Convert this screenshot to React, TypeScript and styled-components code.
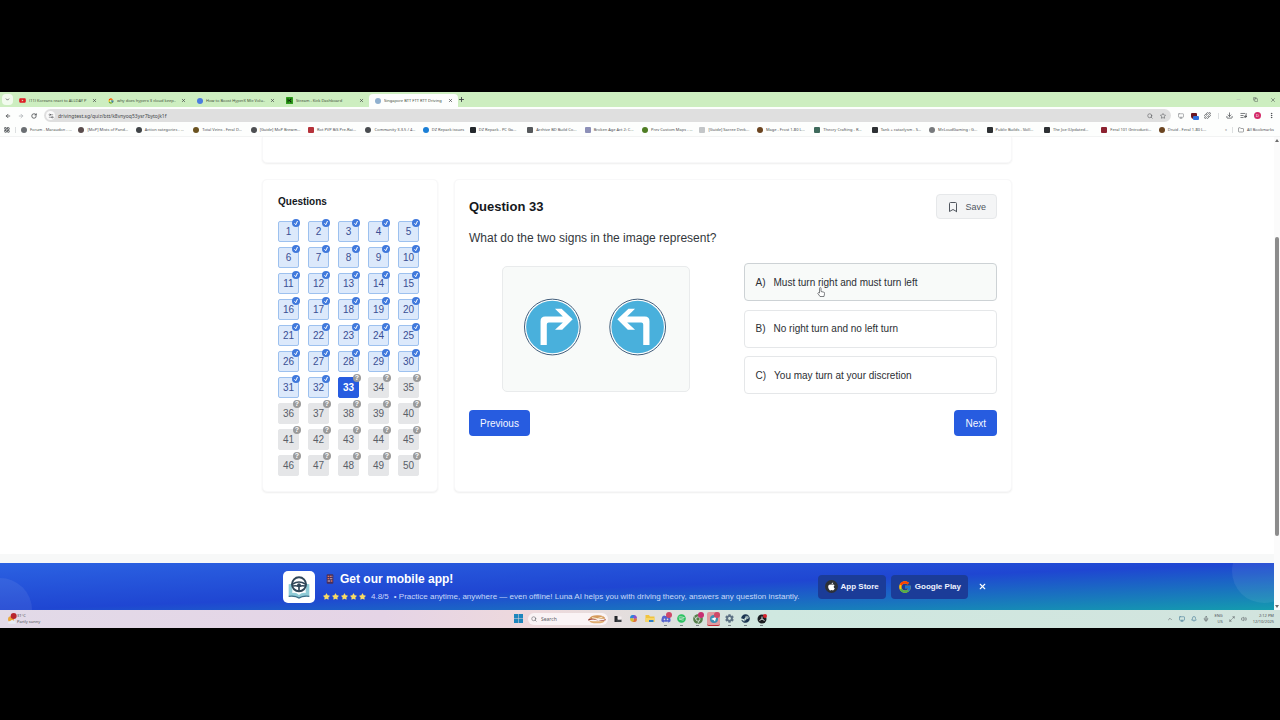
import React from "react";
import styled, { createGlobalStyle } from "styled-components";
import {
  ArrowLeft, ArrowRight, Bell, Bookmark, ChevronDown, ChevronUp, Download, Folder, LayoutGrid, Maximize2,
  Mic, Minus, Monitor, MoreVertical, Plus, Puzzle, RotateCw, Search, Settings2, Star, Volume2, X, ListMusic, Copy,
} from "lucide-react";
import { FaApple, FaChrome, FaDiscord, FaSpotify, FaSteam, FaStar, FaCog, FaYoutube } from "react-icons/fa";
import { FcGoogle } from "react-icons/fc";

const sans = `"Liberation Sans", Arial, sans-serif`;
const ui = `"Noto Sans", "Open Sans", sans-serif`;

const Global = createGlobalStyle`
  * { box-sizing: border-box; }
  body { margin: 0; background: #000; font-family: ${sans}; color: #1f2328; }
  button, input { font: inherit; color: inherit; margin: 0; }
  button { cursor: pointer; padding: 0; border: 0; background: none; }
  h1, h2, h3, p { margin: 0; }
  svg { display: block; flex: none; }
`;

const Frame = styled.div`
  min-height: 100vh;
  display: flex;
  flex-direction: column;
  justify-content: center;
  overflow: hidden;
`;

/* ---------- browser chrome ---------- */

const TabStrip = styled.div`
  display: flex;
  align-items: center;
  height: 15px;
  padding: 0 4px 0 2px;
  background: #cdeec0;
  font-family: ${ui};
  font-size: 4px;
  line-height: 8px;
`;
const TabSearch = styled.button`
  display: grid;
  place-items: center;
  width: 11px;
  height: 11px;
  border-radius: 4px;
  background: #f2fbee;
`;
const Tab = styled.div<{ $active?: boolean }>`
  display: flex;
  align-items: center;
  gap: 3px;
  width: 89px;
  height: 13px;
  align-self: flex-end;
  padding: 0 5px 0 6px;
  border-radius: 4px 4px 0 0;
  background: ${(p) => (p.$active ? "#fdfefd" : "transparent")};
  color: #3c4a38;
`;
const TabTitle = styled.span`
  flex: 1;
  overflow: hidden;
  white-space: nowrap;
`;
const Grow = styled.div`
  flex: 1;
`;
const WindowButtons = styled.div`
  display: flex;
  align-items: center;
  gap: 12px;
  color: #3b4a37;
`;
const IconButton = styled.button<{ $dim?: boolean }>`
  display: grid;
  place-items: center;
  color: ${(p) => (p.$dim ? "#a9adb0" : "#3d4043")};
`;
const AddressRow = styled.div`
  display: flex;
  align-items: center;
  gap: 7px;
  height: 17px;
  padding: 0 5px;
  background: #fdfefd;
`;
const UrlBar = styled.label`
  flex: 1;
  display: flex;
  align-items: center;
  gap: 7px;
  height: 13px;
  padding: 0 5px 0 2px;
  border-radius: 7px;
  background: #dfdfdf;
  color: #44474a;
`;
const SiteInfo = styled.span`
  display: grid;
  place-items: center;
  width: 9px;
  height: 9px;
  margin-right: -4px;
  border-radius: 50%;
  background: #fafafa;
`;
const UrlInput = styled.input`
  flex: 1;
  min-width: 0;
  height: 9px;
  padding: 0;
  border: 0;
  outline: 0;
  background: transparent;
  font-family: ${ui};
  font-size: 5px;
`;
const ExtIcons = styled.div`
  display: flex;
  align-items: center;
  gap: 7px;
`;
const Avatar = styled.span`
  display: grid;
  place-items: center;
  width: 7px;
  height: 7px;
  border-radius: 50%;
  background: #d42a68;
  color: #fff;
  font-size: 4px;
  line-height: 7px;
`;
const Shield = styled.span`
  position: relative;
  width: 6px;
  height: 6px;
  border-radius: 1px 1px 3px 3px;
  background: #6b1620;
`;
const ShieldCount = styled.span`
  position: absolute;
  left: 2px;
  top: 3px;
  width: 6px;
  height: 4px;
  border-radius: 1px;
  background: #2f6fdc;
`;
const Rule = styled.span`
  width: 1px;
  height: 6px;
  background: #dcdfe0;
`;
const BookmarksRow = styled.nav`
  display: flex;
  align-items: center;
  gap: 5px;
  height: 13px;
  padding: 0 6px 1px 4px;
  background: #fdfefd;
  border-bottom: 1px solid #f2f3f3;
  color: #4a4d50;
  font-family: ${ui};
  font-size: 4px;
  line-height: 8px;
`;
const BookmarkList = styled.div`
  flex: 1;
  min-width: 0;
  display: flex;
  padding-right: 4px;
`;
const BookmarkLink = styled.a<{ $short?: boolean }>`
  flex: ${(p) => (p.$short ? "0 0 47px" : "1 1 0")};
  min-width: 0;
  display: flex;
  align-items: center;
  gap: 3px;
  padding-right: 7px;
  color: inherit;
  text-decoration: none;
  white-space: nowrap;
  overflow: hidden;
`;
const Favicon = styled.span<{ $bg: string; $round?: boolean }>`
  flex: none;
  display: grid;
  place-items: center;
  width: 6px;
  height: 6px;
  border-radius: ${(p) => (p.$round ? "50%" : "1px")};
  background: ${(p) => p.$bg};
`;
const AllBookmarks = styled.button`
  display: flex;
  align-items: center;
  gap: 3px;
`;

/* ---------- page ---------- */

const Viewport = styled.div`
  display: flex;
  background: #fff;
`;
const Page = styled.main`
  flex: 1;
  min-width: 0;
  display: flex;
  flex-direction: column;
`;
const Scrollbar = styled.div`
  width: 6px;
  display: flex;
  flex-direction: column;
  align-items: center;
  padding: 1px 0;
  background: #fbfbfb;
`;
const ScrollGap = styled.div<{ $grow: number }>`
  flex: ${(p) => p.$grow} 0 0;
`;
const ScrollThumb = styled.div`
  flex: 298 0 0;
  width: 4px;
  border-radius: 2px;
  background: #8c8c8c;
`;
const Arrow = styled.span<{ $down?: boolean }>`
  width: 4px;
  height: 3px;
  margin: 1px 0;
  background: #6d6d6d;
  clip-path: ${(p) => (p.$down ? "polygon(0 0, 100% 0, 50% 100%)" : "polygon(50% 0, 100% 100%, 0 100%)")};
`;
const Container = styled.div`
  width: 100%;
  max-width: 750px;
  margin: 0 auto;
  padding-bottom: 62px;
`;
const card = `
  background: #fff;
  border: 1px solid #f8f8f9;
  border-radius: 5px;
  box-shadow: 0 1px 2px rgba(0, 0, 0, 0.07);
`;
const TopCard = styled.div`
  ${card}
  height: 26px;
  border-top: 0;
  border-radius: 0 0 5px 5px;
`;
const Columns = styled.div`
  display: flex;
  gap: 16px;
  margin-top: 16px;
`;
const SideCard = styled.section`
  ${card}
  width: 176px;
  min-height: 313px;
  padding: 15px;
`;
const SideTitle = styled.h3`
  font-size: 10px;
  line-height: 14px;
  color: #15181c;
`;
const QuestionGrid = styled.div`
  display: grid;
  grid-template-columns: repeat(5, 21px);
  gap: 5px 9px;
  margin-top: 12px;
`;
type State = "done" | "current" | "open";
const cellColors: Record<State, string> = {
  done: "background:#dce9fb;border-color:#9dc1ef;color:#3a4f94;",
  current: "background:#275ce0;border-color:#275ce0;color:#fff;font-weight:700;",
  open: "background:#e5e6e8;border-color:#e5e6e8;color:#5a5f68;",
};
const Cell = styled.button<{ $state: State }>`
  position: relative;
  width: 21px;
  height: 21px;
  border: 1px solid;
  border-radius: 2px;
  font-size: 10px;
  line-height: 19px;
  text-align: center;
  ${(p) => cellColors[p.$state]}
`;
const Badge = styled.span<{ $done: boolean }>`
  position: absolute;
  top: ${(p) => (p.$done ? -3 : -4)}px;
  right: ${(p) => (p.$done ? -2 : -3)}px;
  display: grid;
  place-items: center;
  width: 8px;
  height: 8px;
  border-radius: 50%;
  background: ${(p) => (p.$done ? "#4079dc" : "#9a9a9a")};
  color: #fff;
  font-size: 7px;
  font-weight: 700;
  line-height: 8px;
`;
const MainCard = styled.section`
  ${card}
  flex: 1;
  min-width: 0;
  padding: 14px;
`;
const MainHead = styled.div`
  display: flex;
  align-items: center;
  justify-content: space-between;
`;
const MainTitle = styled.h2`
  font-size: 13px;
  line-height: 20px;
  color: #15181c;
`;
const SaveButton = styled.button`
  display: flex;
  align-items: center;
  gap: 6px;
  height: 25px;
  padding: 0 10px;
  border: 1px solid #e6e8ea;
  border-radius: 4px;
  background: #f4f5f6;
  color: #50565e;
  font-size: 9px;
`;
const Prompt = styled.p`
  margin-top: 10px;
  font-size: 12px;
  line-height: 18px;
  color: #33373c;
`;
const Body = styled.div`
  display: grid;
  grid-template-columns: 1fr 1fr;
  gap: 21px;
  margin-top: 16px;
`;
const Figure = styled.div`
  justify-self: center;
  align-self: center;
  width: 188px;
  height: 126px;
  border: 1px solid #e9ebec;
  border-radius: 5px;
  background: #f8faf9;
  overflow: hidden;
`;
const Options = styled.div`
  position: relative;
  display: flex;
  flex-direction: column;
  justify-content: space-between;
  min-height: 131px;
`;
const Option = styled.button<{ $hover?: boolean }>`
  display: flex;
  align-items: center;
  gap: 8px;
  height: 38px;
  padding: 0 11px;
  border: 1px solid ${(p) => (p.$hover ? "#cdd2d5" : "#e5e7e9")};
  border-radius: 4px;
  background: ${(p) => (p.$hover ? "#f8faf9" : "#fff")};
  color: #2b2f34;
  font-size: 10px;
  text-align: left;
`;
const Pointer = styled.svg`
  position: absolute;
  left: 73px;
  top: 24px;
`;
const NavRow = styled.div`
  display: flex;
  justify-content: space-between;
  margin-top: 16px;
`;
const NavButton = styled.button`
  height: 26px;
  padding: 0 11px;
  border-radius: 4px;
  background: #275ce0;
  color: #f4f7ff;
  font-size: 10px;
`;
const FooterStrip = styled.div`
  height: 9px;
  background: #f7f8f8;
`;

/* ---------- app banner ---------- */

const Banner = styled.aside`
  position: relative;
  display: flex;
  justify-content: center;
  align-items: center;
  height: 47px;
  overflow: hidden;
  background: linear-gradient(to bottom right, #2b62e2, #1f46d2 50%, #149cae);
`;
const Bubble = styled.span<{ $right?: boolean }>`
  position: absolute;
  width: 64px;
  height: 64px;
  border-radius: 50%;
  background: rgba(255, 255, 255, 0.07);
  ${(p) => (p.$right ? "right: -22px; top: -24px;" : "left: -32px; bottom: -32px;")}
`;
const BannerInner = styled.div`
  flex: 0 1 708px;
  display: flex;
  align-items: center;
  gap: 5px;
`;
const Logo = styled.div`
  display: grid;
  place-items: center;
  width: 32px;
  height: 32px;
  border-radius: 5px;
  background: #fff;
`;
const BannerText = styled.div`
  flex: 1;
  min-width: 0;
  padding-left: 3px;
  color: #c9d7fa;
  font-size: 8px;
  white-space: nowrap;
`;
const BannerTitle = styled.h2`
  display: flex;
  align-items: center;
  gap: 6px;
  padding-left: 3px;
  color: #fff;
  font-size: 12px;
  line-height: 18px;
`;
const Rating = styled.p`
  display: flex;
  align-items: center;
  gap: 5px;
  padding-top: 2px;
  line-height: 14px;
`;
const Stars = styled.span`
  display: flex;
  gap: 2px;
  color: #fbdc63;
`;
const StoreLink = styled.a`
  display: flex;
  align-items: center;
  gap: 3px;
  height: 24px;
  padding: 0 7px;
  border-radius: 4px;
  background: #1b3c98;
  color: #eef3ff;
  font-size: 8px;
  font-weight: 700;
  text-decoration: none;
  white-space: nowrap;
`;
const AppleDisc = styled.span`
  display: grid;
  place-items: center;
  width: 13px;
  height: 13px;
  border-radius: 50%;
  background: #2d3138;
  color: #fff;
`;
const CloseButton = styled.button`
  display: grid;
  place-items: center;
  width: 18px;
  height: 18px;
  color: #fff;
`;

/* ---------- taskbar ---------- */

const Taskbar = styled.footer`
  display: grid;
  grid-template-columns: 1fr auto 1fr;
  align-items: center;
  height: 18px;
  padding: 0 6px;
  background: linear-gradient(90deg, #e2dae8, #e5d4e6 30%, #eed9dc 42%, #dfe0de 52%, #cfe8e0 60%, #d2e4de);
  font-family: ${ui};
  font-size: 4px;
  line-height: 6px;
  color: #4c4f55;
`;
const Weather = styled.div`
  display: flex;
  align-items: center;
  padding-left: 1px;
`;
const Dock = styled.div`
  display: flex;
  align-items: center;
  gap: 3px;
`;
const SearchBox = styled.label`
  display: flex;
  align-items: center;
  gap: 4px;
  width: 80px;
  height: 12px;
  padding: 0 2px 0 3px;
  border-radius: 6px;
  background: #faf3f5;
`;
const SearchInput = styled.input`
  flex: 1;
  min-width: 0;
  height: 10px;
  padding: 0;
  border: 0;
  outline: 0;
  background: transparent;
  font-size: 5px;
  &::placeholder { color: #5d6066; opacity: 1; }
`;
const DockItem = styled.button<{ $active?: string; $run?: boolean }>`
  position: relative;
  display: grid;
  place-items: center;
  width: 13px;
  height: 14px;
  border-radius: 2px;
  background: ${(p) => p.$active || "transparent"};
  border-bottom: 1px solid ${(p) => (p.$active ? "#c22d39" : "transparent")};
  ${(p) =>
    p.$run &&
    `&::after { content: ""; position: absolute; bottom: -1px; left: 5px; width: 3px; height: 1px; background: #7d8489; }`}
`;
const Dot = styled.span<{ $bg?: string }>`
  position: absolute;
  right: 0;
  top: 0;
  width: 6px;
  height: 6px;
  border-radius: 50%;
  background: ${(p) => p.$bg || "#cf4868"};
`;
const Tray = styled.div`
  display: flex;
  align-items: center;
  justify-content: flex-end;
  gap: 6px;
  text-align: right;
  white-space: nowrap;
`;

/* ---------- data ---------- */

const tabs = [
  { icon: <FaYoutube size={7} color="#e01b24" />, title: "(11) Koreans react to ALLDAY P" },
  { icon: <FcGoogle size={6} />, title: "why does hyperx 3 cloud keep.." },
  { icon: <Favicon $bg="#4a7de0" $round />, title: "How to Boost HyperX Mic Volu.." },
  { icon: <KickIcon />, title: "Stream - Kick Dashboard" },
  { icon: <Favicon $bg="#8fb0cf" $round />, title: "Singapore BTT FTT RTT Driving", active: true },
];

const bookmarks: [string, string, boolean?][] = [
  ["Forum - Maraudon - ...", "#6a6e72", true],
  ["[MoP] Mists of Pand...", "#5a4c4c", true],
  ["Action categories - ...", "#3f4347", true],
  ["Total Veins - Feral D...", "#6b5320", true],
  ["[Guide] MoP Brewm...", "#4d4f52", true],
  ["Rot PVP BiS Pre-Rai...", "#b5323a"],
  ["Community 3.3.5 / 4...", "#494c50", true],
  ["DZ Repack issues", "#1b7fd6", true],
  ["DZ Repack - PC Ga...", "#23272b"],
  ["Archive BD Build Co...", "#55585b"],
  ["Broken Age Act 2: C...", "#8d90b8"],
  ["Prev Custom Maps - ...", "#4f7d24", true],
  ["[Guide] Sacree Deck...", "#c3c6c8"],
  ["Mage - Frost 1-80 L...", "#6b4420", true],
  ["Theory Crafting - R...", "#3f6a5c"],
  ["Tank + cataclysm - S...", "#2d3033"],
  ["McLoudGaming : G...", "#77797c", true],
  ["Public Builds - Skill...", "#2d3033"],
  ["The Joe (Updated...", "#2d3033"],
  ["Feral 101 (Introducti...", "#8c2230"],
  ["Druid - Feral 1-80 L...", "#6b4420", true],
];

const answers = ["Must turn right and must turn left", "No right turn and no left turn", "You may turn at your discretion"];

/* ---------- drawings ---------- */

function KickIcon() {
  return (
    <svg width="7" height="7" viewBox="0 0 14 14">
      <rect width="14" height="14" rx="1" fill="#2f9e1c" />
      <path d="M4 3v8M10 3v2H8v4h2v2M5 7h3" stroke="#0b2a05" strokeWidth="2" fill="none" />
    </svg>
  );
}

function SignArrow() {
  return (
    <path
      fill="#fff"
      d="M269 497V424Q269 410 283 410H337L313 386H333L367 418L335 450H313L337 428H294Q288 428 288 434V497Z"
    />
  );
}

function Signs() {
  return (
    <svg width="100%" height="100%" viewBox="156 259 564 378" role="img" aria-label="Two round blue signs with turn arrows">
      {[305, 565].map((cx) => (
        <g key={cx}>
          <circle cx={cx} cy="442" r="85" fill="#fff" stroke="#3d5a78" strokeWidth="3" />
          <circle cx={cx} cy="442" r="80" fill="#49b0dc" />
        </g>
      ))}
      <SignArrow />
      <g transform="translate(870 0) scale(-1 1)">
        <SignArrow />
      </g>
    </svg>
  );
}

function WheelLogo() {
  return (
    <svg width="24" height="24" viewBox="0 0 72 72" fill="none">
      <path d="M5 28V64Q25 60 36 68Q47 60 67 64V28L56 26V54Q44 52 36 60Q28 52 16 54V26Z" fill="#8fcbd6" />
      <path d="M5 62Q25 59 36 67Q47 59 67 62V66Q47 64 36 71Q25 64 5 66Z" fill="#3a6f88" />
      <circle cx="36" cy="28" r="21" fill="#fff" stroke="#2f4658" strokeWidth="6" />
      <path d="M17 27Q36 15 55 27M36 32L36 48M18 33Q28 31 34 34M54 33Q44 31 38 34" stroke="#2f4658" strokeWidth="5" />
      <circle cx="36" cy="31" r="6" fill="#2f4658" />
    </svg>
  );
}

function PhoneIcon() {
  return (
    <svg width="8" height="10" viewBox="0 0 24 30">
      <rect x="2" y="1" width="20" height="28" rx="3" fill="#4a2f5c" />
      <path d="M5 5h4v4H5zM11 5h4v4h-4zM5 12h4v4H5zM15 19h4v4h-4z" fill="#e0765a" />
      <path d="M16 5h3v4h-3zM11 12h8v4h-8zM5 19h8v4H5z" fill="#b08f9e" />
    </svg>
  );
}

function Windows() {
  return (
    <svg width="9" height="9" viewBox="0 0 18 18">
      <path d="M0 0h8.500v8.500H0zM9.500 0H18v8.500H9.500zM0 9.500h8.500V18H0zM9.500 9.500H18V18H9.500z" fill="#1d86bd" />
    </svg>
  );
}

function Burger() {
  return (
    <svg width="18" height="10" viewBox="0 0 54 30">
      <path d="M3 14Q10 3 30 4Q50 5 52 14Z" fill="#d59a5c" />
      <path d="M1 15Q14 11 26 17T53 15V19Q40 24 27 19T1 20Z" fill="#9a3b2c" />
      <path d="M4 20Q27 24 50 20Q48 28 27 28T4 20Z" fill="#e0ae72" />
      <path d="M12 11L28 14L44 9" stroke="#f8ecd5" strokeWidth="3" fill="none" />
    </svg>
  );
}

function TaskView() {
  return (
    <svg width="8" height="8" viewBox="0 0 16 16">
      <rect x="1" y="2" width="6" height="12" fill="#24272b" />
      <rect x="5" y="9" width="10" height="5" fill="#3b3f44" />
      <rect x="8" y="3" width="7" height="6" fill="#f4eef0" />
    </svg>
  );
}

function Copilot() {
  return (
    <svg width="9" height="9" viewBox="0 0 18 18">
      <path d="M2 9Q2 2 7 2h5L9 9z" fill="#2a86d8" />
      <path d="M11 2q5 1 5 7l-5 1-3-3z" fill="#8a4fd0" />
      <path d="M16 9q0 7-5 7H7l3-7z" fill="#e0703f" />
      <path d="M2 9l5-1 3 4-2 4Q2 15 2 9z" fill="#d9bb35" />
    </svg>
  );
}

function Explorer() {
  return (
    <svg width="10" height="9" viewBox="0 0 20 18">
      <path d="M1 2h7l2 3h9v11H1z" fill="#f0c33f" />
      <path d="M1 8h18v8H1z" fill="#f7d667" />
      <rect x="8" y="12" width="9" height="4" fill="#2f80c9" />
    </svg>
  );
}

function Obs() {
  return (
    <svg width="10" height="10" viewBox="0 0 20 20">
      <circle cx="10" cy="10" r="9" fill="#1b1d20" />
      <path d="M10 10V5M10 10l-5 3M10 10l5 3" stroke="#d8dadc" strokeWidth="2" />
      <circle cx="16" cy="4" r="4" fill="#d8232c" />
    </svg>
  );
}

function Telegram() {
  return (
    <svg width="10" height="10" viewBox="0 0 20 20">
      <circle cx="10" cy="10" r="8" fill="#3a8fb5" />
      <path d="M4 10l11-5-3 10-3-3z" fill="#fff" />
    </svg>
  );
}

function WeatherIcon() {
  return (
    <svg width="10" height="12" viewBox="0 0 30 36">
      <circle cx="12" cy="19" r="9" fill="#e9a63c" />
      <path d="M4 32q-3-8 6-8q5-6 11 0q7 1 5 8z" fill="#e6ebf5" />
      <circle cx="20" cy="9" r="9" fill="#b8262e" />
    </svg>
  );
}

/* ---------- sections ---------- */

function Chrome() {
  return (
    <header>
      <TabStrip>
        <TabSearch aria-label="Search tabs"><ChevronDown size={5} strokeWidth={3} /></TabSearch>
        {tabs.map((t) => (
          <Tab key={t.title} $active={t.active}>
            {t.icon}
            <TabTitle>{t.title}</TabTitle>
            <IconButton aria-label="Close tab"><X size={5} strokeWidth={3} /></IconButton>
          </Tab>
        ))}
        <IconButton aria-label="New tab"><Plus size={7} strokeWidth={3} /></IconButton>
        <Grow />
        <WindowButtons>
          <IconButton $dim aria-label="Minimize"><Minus size={5} /></IconButton>
          <IconButton aria-label="Restore"><Copy size={5} /></IconButton>
          <IconButton aria-label="Close"><X size={6} /></IconButton>
        </WindowButtons>
      </TabStrip>
      <AddressRow>
        <IconButton aria-label="Back"><ArrowLeft size={6} strokeWidth={3} /></IconButton>
        <IconButton $dim aria-label="Forward"><ArrowRight size={6} strokeWidth={3} /></IconButton>
        <IconButton aria-label="Reload"><RotateCw size={6} strokeWidth={3} /></IconButton>
        <UrlBar>
          <SiteInfo><Settings2 size={6} /></SiteInfo>
          <UrlInput aria-label="Address" defaultValue="drivingtest.sg/quiz/btt/k8vnyoq53ysr7bytojk1f" />
          <Search size={6} />
          <Star size={6} />
        </UrlBar>
        <ExtIcons>
          <Monitor size={6} color="#6b6e71" />
          <Shield><ShieldCount /></Shield>
          <Puzzle size={7} />
          <Rule />
          <Download size={7} />
          <ListMusic size={7} />
          <Avatar>D</Avatar>
          <MoreVertical size={7} />
        </ExtIcons>
      </AddressRow>
      <BookmarksRow>
        <LayoutGrid size={6} strokeWidth={3} />
        <Rule />
        <BookmarkList>
          {bookmarks.map(([title, color, round]) => (
            <BookmarkLink key={title} href="#" $short={title === "DZ Repack issues"}>
              <Favicon $bg={color} $round={round} />
              {title}
            </BookmarkLink>
          ))}
        </BookmarkList>
        <span>»</span>
        <Rule />
        <AllBookmarks><Folder size={6} />All Bookmarks</AllBookmarks>
      </BookmarksRow>
    </header>
  );
}

function QuestionCell({ n }: { n: number }) {
  const state: State = n < 33 ? "done" : n === 33 ? "current" : "open";
  const done = state === "done";
  return (
    <Cell $state={state}>
      {n}
      <Badge $done={done}>
        {done ? (
          <svg width="6" height="6" viewBox="0 0 12 12">
            <path d="M3 6.500L5.500 9.500L9 2" stroke="#fff" strokeWidth="2" fill="none" />
          </svg>
        ) : (
          "?"
        )}
      </Badge>
    </Cell>
  );
}

function Quiz() {
  return (
    <Container>
      <TopCard />
      <Columns>
        <SideCard>
          <SideTitle>Questions</SideTitle>
          <QuestionGrid>
            {Array.from({ length: 50 }, (_, i) => <QuestionCell key={i} n={i + 1} />)}
          </QuestionGrid>
        </SideCard>
        <MainCard>
          <MainHead>
            <MainTitle>Question 33</MainTitle>
            <SaveButton><Bookmark size={12} />Save</SaveButton>
          </MainHead>
          <Prompt>What do the two signs in the image represent?</Prompt>
          <Body>
            <Figure><Signs /></Figure>
            <Options>
              {answers.map((text, i) => (
                <Option key={text} $hover={i === 0}>
                  <span>{"ABC"[i]})</span>
                  <span>{text}</span>
                </Option>
              ))}
              <Pointer width="8" height="10" viewBox="0 0 16 20">
                <path
                  d="M5 12V3q0-2 1.500-2T8 3v6l6 1.500q1.500.5 1.200 2L14 19H6L1.500 12.500Q2.500 10 5 12z"
                  fill="#fff" stroke="#55585c" strokeWidth="1.500"
                />
              </Pointer>
            </Options>
          </Body>
          <NavRow>
            <NavButton>Previous</NavButton>
            <NavButton>Next</NavButton>
          </NavRow>
        </MainCard>
      </Columns>
    </Container>
  );
}

function AppBanner() {
  return (
    <Banner>
      <Bubble />
      <Bubble $right />
      <BannerInner>
        <Logo><WheelLogo /></Logo>
        <BannerText>
          <BannerTitle><PhoneIcon />Get our mobile app!</BannerTitle>
          <Rating>
            <Stars>{[0, 1, 2, 3, 4].map((i) => <FaStar key={i} size={7} />)}</Stars>
            <span>4.8/5</span>
            <span>• Practice anytime, anywhere — even offline! Luna AI helps you with driving theory, answers any question instantly.</span>
          </Rating>
        </BannerText>
        <StoreLink href="#"><AppleDisc><FaApple size={9} /></AppleDisc>App Store</StoreLink>
        <StoreLink href="#"><FcGoogle size={14} />Google Play</StoreLink>
        <CloseButton aria-label="Dismiss"><X size={9} strokeWidth={3} /></CloseButton>
      </BannerInner>
    </Banner>
  );
}

function WindowsTaskbar() {
  return (
    <Taskbar>
      <Weather>
        <WeatherIcon />
        <div>
          <div>31°C</div>
          <div>Partly sunny</div>
        </div>
      </Weather>
      <Dock>
        <DockItem aria-label="Start"><Windows /></DockItem>
        <SearchBox>
          <Search size={6} />
          <SearchInput placeholder="Search" aria-label="Search" />
          <Burger />
        </SearchBox>
        <DockItem aria-label="Task view"><TaskView /></DockItem>
        <DockItem aria-label="Copilot"><Copilot /></DockItem>
        <DockItem aria-label="Files"><Explorer /></DockItem>
        <DockItem $run aria-label="Discord"><FaDiscord size={10} color="#5562cf" /><Dot /></DockItem>
        <DockItem $run aria-label="Spotify"><FaSpotify size={9} color="#2cc463" /></DockItem>
        <DockItem $run aria-label="Chrome"><FaChrome size={10} color="#56804c" /><Dot $bg="#c82f72" /></DockItem>
        <DockItem $active="#e09aa0" aria-label="Messages"><Telegram /><Dot /></DockItem>
        <DockItem $run aria-label="Settings"><FaCog size={9} color="#5e7284" /></DockItem>
        <DockItem $run aria-label="Steam"><FaSteam size={9} color="#1c3552" /></DockItem>
        <DockItem $run aria-label="Recorder"><Obs /></DockItem>
      </Dock>
      <Tray>
        <ChevronUp size={6} />
        <Monitor size={6} color="#2f6a8c" />
        <Bell size={6} color="#2f6a8c" />
        <Mic size={6} />
        <div>ENG<br />US</div>
        <Maximize2 size={6} />
        <Volume2 size={6} />
        <div>2:12 PM<br />12/10/2025</div>
      </Tray>
    </Taskbar>
  );
}

export default function App() {
  return (
    <Frame>
      <Global />
      <Chrome />
      <Viewport>
        <Page>
          <Quiz />
          <FooterStrip />
          <AppBanner />
        </Page>
        <Scrollbar>
          <Arrow />
          <ScrollGap $grow={94} />
          <ScrollThumb />
          <ScrollGap $grow={68} />
          <Arrow $down />
        </Scrollbar>
      </Viewport>
      <WindowsTaskbar />
    </Frame>
  );
}
